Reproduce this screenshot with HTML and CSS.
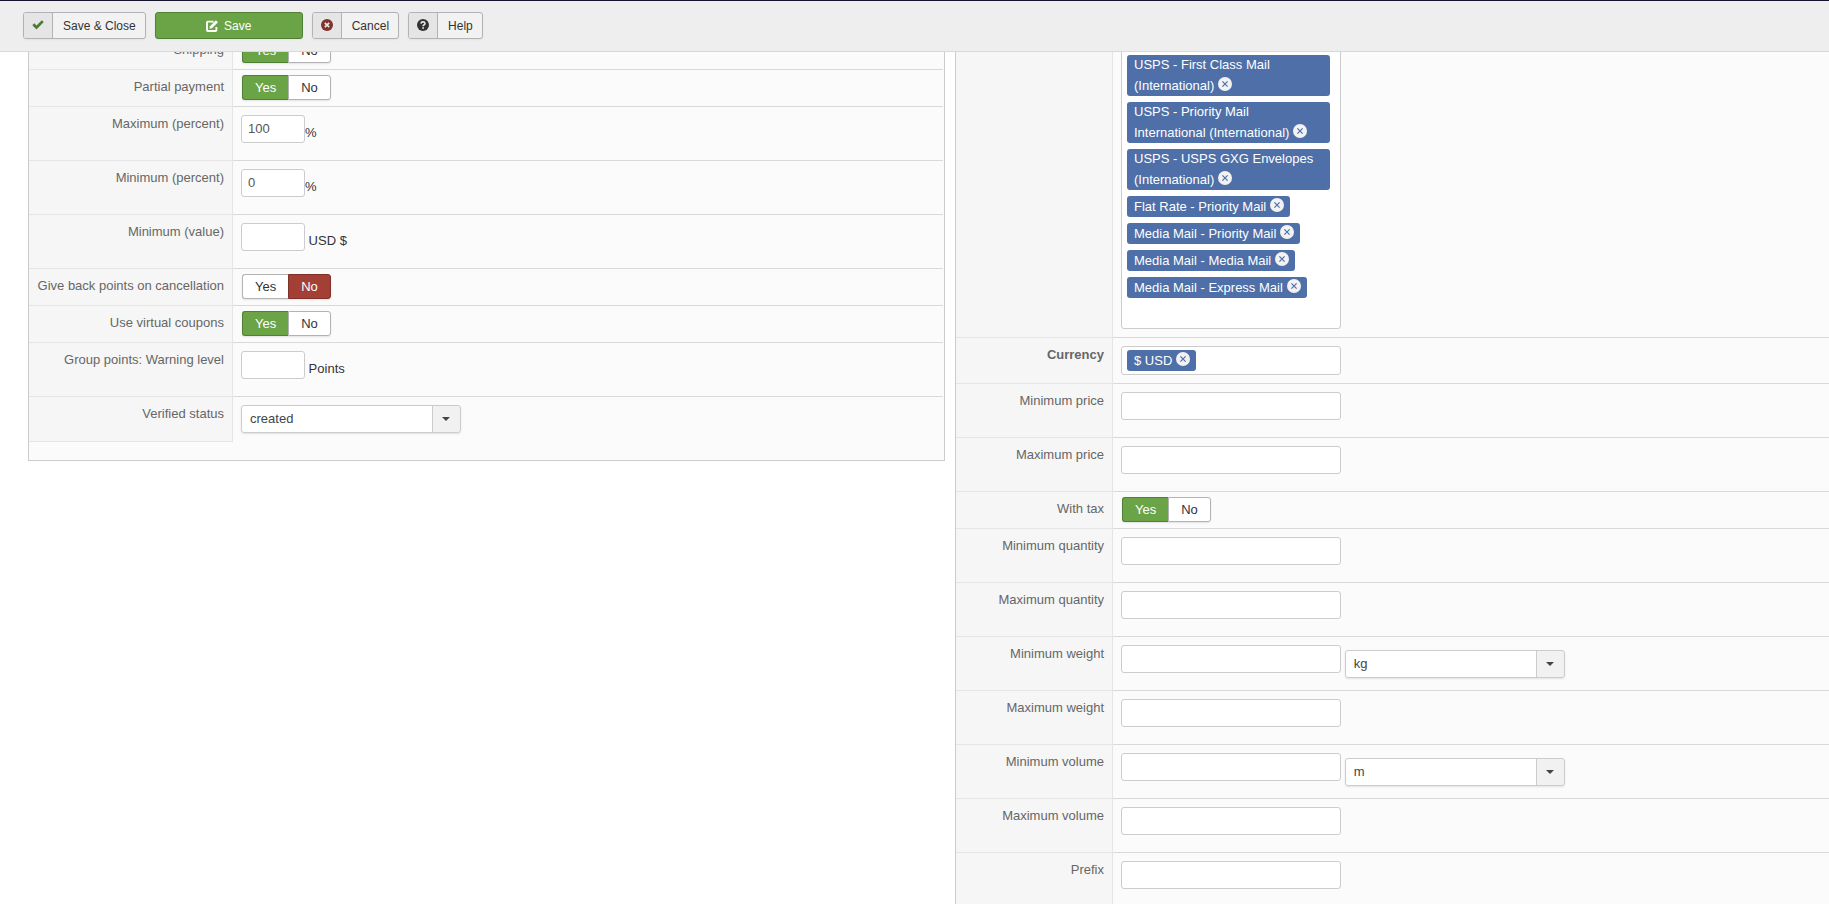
FILE: index.html
```html
<!DOCTYPE html>
<html lang="en">
<head>
    <meta charset="UTF-8">
    <meta name="viewport" content="width=device-width, initial-scale=1.0">
    <title>Payment method</title>
    <link rel="stylesheet" href="styles.css">
</head>
<body>
    <!-- Toolbar -->
    <header class="toolbar">
        <button type="button" class="tool">
            <span class="tool-icon"><svg width="12" height="12" viewBox="0 0 12 12"><path d="M0.3 6.2 2.3 4.3 4.5 6.4 9.8 1.2 11.8 3.1 4.5 10.4Z" fill="#4a7c35"/></svg></span>
            <span class="tool-text">Save &amp; Close</span>
        </button>
        <button type="button" class="tool tool-save">
            <svg width="12" height="12" viewBox="0 0 12 12"><path d="M7.6 1.6H1.9Q1 1.6 1 2.5V10.1Q1 11 1.9 11H9.5Q10.4 11 10.4 10.1V7" fill="none" stroke="#fff" stroke-width="1.9"/><path d="M3.5 8.7 4 6.2 9.9 0.2 12 2.2 6 8.2Z" fill="#fff"/></svg>
            Save
        </button>
        <button type="button" class="tool">
            <span class="tool-icon"><svg width="12" height="12" viewBox="0 0 12 12"><circle cx="6" cy="6" r="6" fill="#80322b"/><path d="M3.8 3.8 8.2 8.2M8.2 3.8 3.8 8.2" stroke="#e6e6e6" stroke-width="1.7"/></svg></span>
            <span class="tool-text">Cancel</span>
        </button>
        <button type="button" class="tool">
            <span class="tool-icon"><svg width="12" height="12" viewBox="0 0 12 12"><circle cx="6" cy="6" r="6" fill="#333"/><path d="M4 4.6Q4.1 2.9 6 2.9T8 4.5Q8 5.4 6.9 5.9Q6.1 6.3 6.1 7.2" fill="none" stroke="#e6e6e6" stroke-width="1.6"/><path d="M5.2 8.2H7V9.8H5.2Z" fill="#e6e6e6"/></svg></span>
            <span class="tool-text">Help</span>
        </button>
    </header>

    <main class="columns">
        <!-- Plugin options -->
        <section class="panel">
            <table class="options">
                <tr>
                    <th>Shipping</th>
                    <td class="toggle-cell">
                        <div class="toggle" role="radiogroup" aria-label="Shipping">
                            <input type="radio" name="shipping" id="shipping1" checked><label class="yes" for="shipping1">Yes</label>
                            <input type="radio" name="shipping" id="shipping0"><label class="no" for="shipping0">No</label>
                        </div>
                    </td>
                </tr>
                <tr>
                    <th>Partial payment</th>
                    <td class="toggle-cell">
                        <div class="toggle" role="radiogroup" aria-label="Partial payment">
                            <input type="radio" name="partial" id="partial1" checked><label class="yes" for="partial1">Yes</label>
                            <input type="radio" name="partial" id="partial0"><label class="no" for="partial0">No</label>
                        </div>
                    </td>
                </tr>
                <tr>
                    <th><label for="percentMax">Maximum (percent)</label></th>
                    <td><input type="text" class="text small" id="percentMax" value="100">%</td>
                </tr>
                <tr>
                    <th><label for="percentMin">Minimum (percent)</label></th>
                    <td><input type="text" class="text small" id="percentMin" value="0">%</td>
                </tr>
                <tr>
                    <th><label for="valueMin">Minimum (value)</label></th>
                    <td><input type="text" class="text small" id="valueMin"> USD $</td>
                </tr>
                <tr>
                    <th>Give back points on cancellation</th>
                    <td class="toggle-cell">
                        <div class="toggle" role="radiogroup" aria-label="Give back points on cancellation">
                            <input type="radio" name="giveback" id="giveback1"><label class="yes" for="giveback1">Yes</label>
                            <input type="radio" name="giveback" id="giveback0" checked><label class="no" for="giveback0">No</label>
                        </div>
                    </td>
                </tr>
                <tr>
                    <th>Use virtual coupons</th>
                    <td class="toggle-cell">
                        <div class="toggle" role="radiogroup" aria-label="Use virtual coupons">
                            <input type="radio" name="coupons" id="coupons1" checked><label class="yes" for="coupons1">Yes</label>
                            <input type="radio" name="coupons" id="coupons0"><label class="no" for="coupons0">No</label>
                        </div>
                    </td>
                </tr>
                <tr>
                    <th><label for="warning">Group points: Warning level</label></th>
                    <td><input type="text" class="text small" id="warning"> Points</td>
                </tr>
                <tr>
                    <th><label for="status">Verified status</label></th>
                    <td><span class="select"><select id="status"><option>created</option></select></span></td>
                </tr>
            </table>
        </section>

        <!-- Restrictions -->
        <section class="panel restrictions">
            <table class="options">
                <tr>
                    <th></th>
                    <td class="methods-cell">
                        <div class="chips methods">
                            <span class="chip">USPS - First Class Mail (International)<button type="button" aria-label="Remove"><svg viewBox="0 0 14 14"><path d="M4.4 4.4 9.6 9.6M9.6 4.4 4.4 9.6"/></svg></button></span>
                            <span class="chip">USPS - Priority Mail International (International)<button type="button" aria-label="Remove"><svg viewBox="0 0 14 14"><path d="M4.4 4.4 9.6 9.6M9.6 4.4 4.4 9.6"/></svg></button></span>
                            <span class="chip">USPS - USPS GXG Envelopes (International)<button type="button" aria-label="Remove"><svg viewBox="0 0 14 14"><path d="M4.4 4.4 9.6 9.6M9.6 4.4 4.4 9.6"/></svg></button></span>
                            <span class="chip">Flat Rate - Priority Mail<button type="button" aria-label="Remove"><svg viewBox="0 0 14 14"><path d="M4.4 4.4 9.6 9.6M9.6 4.4 4.4 9.6"/></svg></button></span>
                            <span class="chip">Media Mail - Priority Mail<button type="button" aria-label="Remove"><svg viewBox="0 0 14 14"><path d="M4.4 4.4 9.6 9.6M9.6 4.4 4.4 9.6"/></svg></button></span>
                            <span class="chip">Media Mail - Media Mail<button type="button" aria-label="Remove"><svg viewBox="0 0 14 14"><path d="M4.4 4.4 9.6 9.6M9.6 4.4 4.4 9.6"/></svg></button></span>
                            <span class="chip">Media Mail - Express Mail<button type="button" aria-label="Remove"><svg viewBox="0 0 14 14"><path d="M4.4 4.4 9.6 9.6M9.6 4.4 4.4 9.6"/></svg></button></span>
                            <input type="text" class="chip-search" aria-label="Shipping methods">
                        </div>
                    </td>
                </tr>
                <tr>
                    <th><label class="strong" for="currency">Currency</label></th>
                    <td>
                        <div class="chips">
                            <span class="chip">$ USD<button type="button" aria-label="Remove"><svg viewBox="0 0 14 14"><path d="M4.4 4.4 9.6 9.6M9.6 4.4 4.4 9.6"/></svg></button></span>
                            <input type="text" class="chip-search" id="currency">
                        </div>
                    </td>
                </tr>
                <tr>
                    <th><label for="minPrice">Minimum price</label></th>
                    <td><input type="text" class="text" id="minPrice"></td>
                </tr>
                <tr>
                    <th><label for="maxPrice">Maximum price</label></th>
                    <td><input type="text" class="text" id="maxPrice"></td>
                </tr>
                <tr>
                    <th>With tax</th>
                    <td class="toggle-cell">
                        <div class="toggle" role="radiogroup" aria-label="With tax">
                            <input type="radio" name="tax" id="tax1" checked><label class="yes" for="tax1">Yes</label>
                            <input type="radio" name="tax" id="tax0"><label class="no" for="tax0">No</label>
                        </div>
                    </td>
                </tr>
                <tr>
                    <th><label for="minQty">Minimum quantity</label></th>
                    <td><input type="text" class="text" id="minQty"></td>
                </tr>
                <tr>
                    <th><label for="maxQty">Maximum quantity</label></th>
                    <td><input type="text" class="text" id="maxQty"></td>
                </tr>
                <tr>
                    <th><label for="minWeight">Minimum weight</label></th>
                    <td>
                        <input type="text" class="text" id="minWeight">
                        <span class="select"><select aria-label="Weight unit"><option>kg</option></select></span>
                    </td>
                </tr>
                <tr>
                    <th><label for="maxWeight">Maximum weight</label></th>
                    <td><input type="text" class="text" id="maxWeight"></td>
                </tr>
                <tr>
                    <th><label for="minVolume">Minimum volume</label></th>
                    <td>
                        <input type="text" class="text" id="minVolume">
                        <span class="select"><select aria-label="Volume unit"><option>m</option></select></span>
                    </td>
                </tr>
                <tr>
                    <th><label for="maxVolume">Maximum volume</label></th>
                    <td><input type="text" class="text" id="maxVolume"></td>
                </tr>
                <tr>
                    <th><label for="prefix">Prefix</label></th>
                    <td><input type="text" class="text" id="prefix"></td>
                </tr>
            </table>
        </section>
    </main>
</body>
</html>
```

FILE: styles.css
```css
* {
    box-sizing: border-box;
}

body {
    margin: 0;
    height: 100vh;
    overflow: hidden;
    background: #fff;
    color: #333;
    font-family: "Liberation Sans", Arial, sans-serif;
    font-size: 13px;
    line-height: 18px;
}

input, select, button {
    font-family: inherit;
    font-size: 13px;
}

.toolbar {
    position: fixed;
    top: 0;
    left: 0;
    right: 0;
    z-index: 10;
    display: flex;
    gap: 9px;
    padding: 11px 23px 12px;
    background: #eee;
    border-top: 1px solid #13132b;
    border-bottom: 1px solid #d9d9d9;
}

.tool {
    display: flex;
    height: 27px;
    padding: 0;
    background: #f2f2f2;
    border: 1px solid #b3b3b3;
    border-radius: 3px;
    box-shadow: 0 1px 2px rgba(0, 0, 0, 0.05);
    color: #333;
    font-size: 12px;
    line-height: 26px;
    overflow: hidden;
    cursor: pointer;
}

.tool-icon {
    display: flex;
    justify-content: center;
    align-self: stretch;
    width: 29px;
    padding-top: 6px;
    background: #e5e5e5;
    border-right: 1px solid #b3b3b3;
}

.tool-text {
    padding: 0 9px 0 10px;
}

.tool-save {
    justify-content: center;
    align-items: center;
    gap: 6px;
    width: 148px;
    background: #6ba446;
    border-color: #4f8035;
    color: #fff;
}

.columns {
    display: grid;
    grid-template-columns: 917fr 874fr;
    align-items: start;
    gap: 10px;
    padding: 33px 0 0 28px;
}

.panel {
    padding: 0 1px 18px 0;
    background: #fbfbfb;
    border: 1px solid #ccc;
    border-top: none;
}

.restrictions {
    padding: 0;
    border-right: none;
}

.options {
    width: 100%;
    border-spacing: 0;
}

.options th {
    width: 204px;
    padding: 8px;
    background: #f6f6f6;
    border-right: 1px solid #e5e5e5;
    border-bottom: 1px solid #e5e5e5;
    color: #666;
    font-weight: normal;
    text-align: right;
    vertical-align: top;
    white-space: nowrap;
}

.restrictions th {
    width: 157px;
}

.strong {
    font-weight: bold;
}

.options td {
    padding: 8px;
    border-bottom: 1px solid #d9d9d9;
    vertical-align: top;
}

.options tr:last-child td {
    border-bottom-color: transparent;
}

.options .toggle-cell {
    padding: 5px 9px 6px;
}

.options .methods-cell {
    padding-top: 18px;
}

.text {
    width: 220px;
    height: 28px;
    margin: 0 0 9px;
    padding: 3px 6px 5px;
    background: #fff;
    border: 1px solid #ccc;
    border-radius: 3px;
    color: #555;
    vertical-align: middle;
}

.small {
    width: 64px;
}

/* Yes / No switch */
.toggle {
    display: flex;
    width: max-content;
    border-radius: 3px;
    box-shadow: 0 1px 2px rgba(0, 0, 0, 0.1);
}

.toggle input {
    position: absolute;
    opacity: 0;
    pointer-events: none;
}

.toggle label {
    height: 25px;
    padding: 0 12px;
    background: #fff;
    border: 1px solid #b3b3b3;
    line-height: 24px;
    cursor: pointer;
}

.toggle .yes {
    border-right: none;
    border-radius: 3px 0 0 3px;
}

.toggle .no {
    border-radius: 0 3px 3px 0;
}

.toggle input:checked + .yes {
    background: #6ba446;
    border-color: #4f8035;
    color: #fff;
}

.toggle input:checked + .no {
    background: #a33f35;
    border-color: #7f3029;
    color: #fff;
}

/* Drop-downs */
.select {
    position: relative;
    display: inline-block;
    width: 220px;
    height: 28px;
    vertical-align: middle;
}

.select select {
    width: 100%;
    height: 28px;
    padding: 0 36px 1px 8px;
    appearance: none;
    background: linear-gradient(to left, #f1f1f1 27px, #ccc 27px, #ccc 28px, #fff 28px);
    border: 1px solid #ccc;
    border-radius: 3px;
    box-shadow: 0 1px 2px rgba(0, 0, 0, 0.1);
    color: #444;
}

.select::after {
    content: "";
    position: absolute;
    top: 12px;
    right: 11px;
    border: 4px solid transparent;
    border-top-color: #444;
    border-bottom: none;
    pointer-events: none;
}

/* Multiple choice boxes */
.chips {
    display: flex;
    gap: 6px;
    width: 220px;
    padding: 3px 10px 3px 5px;
    background: #fff;
    border: 1px solid #ccc;
    border-radius: 3px;
}

.methods {
    flex-direction: column;
    align-items: flex-start;
    border-radius: 0 0 3px 3px;
}

.chip {
    padding: 0 12px 0 7px;
    background: #4e6fa8;
    border-radius: 3px;
    color: #fff;
    line-height: 20px;
}

/* the remove button reaches into the chip's right padding */
.chip button {
    width: 14px;
    height: 14px;
    margin: 2px -6px 0 4px;
    padding: 0;
    background: #f2f2f2;
    border: none;
    border-radius: 50%;
    vertical-align: -1px;
    cursor: pointer;
}

.chip svg {
    display: block;
    fill: none;
    stroke: #4e6fa8;
    stroke-width: 1.2;
}

.chip-search {
    flex: 1 0 21px;
    width: 25px;
    min-width: 0;
    height: 21px;
    padding: 0;
    background: transparent;
    border: none;
    outline: none;
}
```
